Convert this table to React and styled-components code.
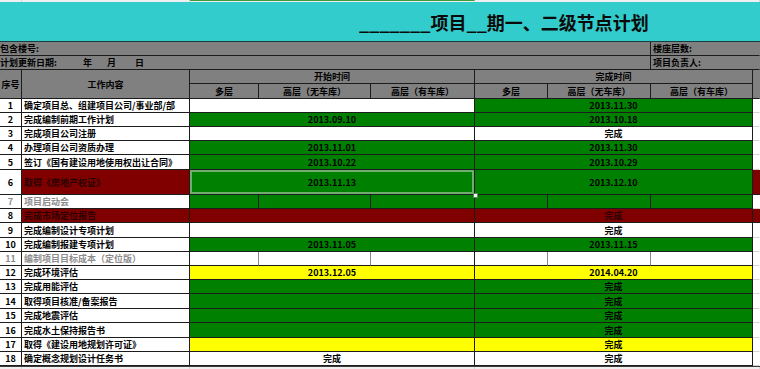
import React from "react";
import styled, { createGlobalStyle } from "styled-components";

const COLS = "22px 168px 69px 112px 104px 73px 103px 102px 7px";
const W = "#ffffff";
const G = "#008000";
const Y = "#ffff00";
const R = "#800000";
const GR = "#808080";
const LINE = "#1c1c1c";

const Global = createGlobalStyle`
  html, body { margin: 0; padding: 0; background: #ffffff; overflow: hidden; }
  body { font-family: "Noto Sans CJK SC", "Noto Sans", sans-serif; }
  * { box-sizing: border-box; }
`;

const Page = styled.div`
  width: 760px;
  height: 369px;
  display: flex;
  flex-direction: column;
  overflow: hidden;
`;

const Strip = styled.div`
  display: grid;
  grid-template-columns: ${COLS};
  height: ${(p) => p.$h}px;
  background: #efefef;
  border-top: ${(p) => (p.$top ? "1px solid #3a3a3a" : "none")};
`;

const StripCell = styled.div`
  grid-column: span ${(p) => p.$span || 1};
  border-right: 1px solid #d6d6d6;
  border-top: ${(p) => (p.$accent ? `1px solid #3c9c3c` : "none")};
`;

const TitleBar = styled.div`
  height: 40px;
  background: #33cccc;
  border-bottom: 1px solid #1d3b3b;
  display: flex;
  align-items: center;
  padding-left: 359px;
  font-size: 18px;
  font-weight: 700;
  color: #0a0a0a;
  white-space: pre;
  letter-spacing: 0;
`;

const Row = styled.div`
  display: grid;
  grid-template-columns: ${COLS};
  height: ${(p) => p.$h}px;
`;

const HeaderBlock = styled.div`
  display: grid;
  grid-template-columns: ${COLS};
  grid-template-rows: 14px 15px;
`;

const Cell = styled.div`
  grid-column: span ${(p) => p.$span || 1};
  grid-row: span ${(p) => p.$rows || 1};
  position: relative;
  background: ${(p) => p.$bg || W};
  color: ${(p) => p.$color || "#000"};
  border-right: 1px solid ${(p) => p.$vline || LINE};
  border-bottom: 1px solid ${(p) => p.$hline || LINE};
  display: flex;
  align-items: center;
  justify-content: ${(p) => (p.$left ? "flex-start" : "center")};
  padding-left: ${(p) => (p.$left ? p.$pad ?? 2 : 0)}px;
  font-size: 9px;
  font-weight: 700;
  line-height: 1;
  white-space: nowrap;
  overflow: ${(p) => (p.$selected ? "visible" : "hidden")};
  box-shadow: ${(p) => (p.$selected ? "inset 0 0 0 2px #6fae6f" : "none")};
`;

const Handle = styled.span`
  position: absolute;
  right: -4px;
  bottom: -4px;
  width: 5px;
  height: 5px;
  background: #ffffff;
  border: 1px solid #5a8f5a;
  z-index: 2;
`;

const DatePart = styled.span`
  margin-left: ${(p) => p.$ml}px;
`;

const rows = [
  { n: 1, task: "确定项目总、组建项目公司/事业部/部", start: { bg: W }, finish: { bg: G, text: "2013.11.30" }, h: 14 },
  { n: 2, task: "完成编制前期工作计划", start: { bg: G, text: "2013.09.10" }, finish: { bg: G, text: "2013.10.18" }, h: 14 },
  { n: 3, task: "完成项目公司注册", start: { bg: W }, finish: { bg: W, text: "完成" }, h: 14 },
  { n: 4, task: "办理项目公司资质办理", start: { bg: G, text: "2013.11.01" }, finish: { bg: G, text: "2013.11.30" }, h: 14 },
  { n: 5, task: "签订《国有建设用地使用权出让合同》", start: { bg: G, text: "2013.10.22" }, finish: { bg: G, text: "2013.10.29" }, h: 15 },
  { n: 6, task: "取得《房地产权证》", taskBg: R, start: { bg: G, text: "2013.11.13", selected: true }, finish: { bg: G, text: "2013.12.10" }, extra: R, h: 25 },
  { n: 7, task: "项目启动会", muted: true, start: { bg: G, split: true }, finish: { bg: G, split: true }, h: 14 },
  { n: 8, task: "完成市场定位报告", taskBg: R, start: { bg: R }, finish: { bg: R, text: "完成" }, extra: R, h: 14 },
  { n: 9, task: "完成编制设计专项计划", start: { bg: W }, finish: { bg: W, text: "完成" }, h: 15 },
  { n: 10, task: "完成编制报建专项计划", start: { bg: G, text: "2013.11.05" }, finish: { bg: G, text: "2013.11.15" }, h: 14 },
  { n: 11, task: "编制项目目标成本（定位版）", muted: true, start: { bg: W, split: true }, finish: { bg: W, split: true }, h: 14 },
  { n: 12, task: "完成环境评估", start: { bg: Y, text: "2013.12.05" }, finish: { bg: Y, text: "2014.04.20" }, h: 14 },
  { n: 13, task: "完成用能评估", start: { bg: G }, finish: { bg: G, text: "完成" }, h: 14 },
  { n: 14, task: "取得项目核准/备案报告", start: { bg: G }, finish: { bg: G, text: "完成" }, h: 15 },
  { n: 15, task: "完成地震评估", start: { bg: G }, finish: { bg: G, text: "完成" }, h: 14 },
  { n: 16, task: "完成水土保持报告书", start: { bg: G }, finish: { bg: G, text: "完成" }, h: 15 },
  { n: 17, task: "取得《建设用地规划许可证》", start: { bg: Y }, finish: { bg: Y, text: "完成" }, h: 14 },
  { n: 18, task: "确定概念规划设计任务书", start: { bg: W, text: "完成" }, finish: { bg: W, text: "完成" }, h: 14 },
];

function timeCells(part, key) {
  const textColor = part.bg === R ? "#2a0000" : "#000";
  const splitLine = part.bg === W ? "#8a8a8a" : LINE;
  if (part.split) {
    return [0, 1, 2].map((i) => (
      <Cell key={`${key}${i}`} $bg={part.bg} $vline={i < 2 ? splitLine : LINE} />
    ));
  }
  return (
    <Cell key={key} $span={3} $bg={part.bg} $color={textColor} $selected={part.selected}>
      {part.text}
      {part.selected && <Handle />}
    </Cell>
  );
}

export default function App() {
  return (
    <Page>
      <Global />
      <Strip $h={2}>
        <StripCell />
        <StripCell />
        <StripCell $span={3} $accent />
        <StripCell $span={4} />
      </Strip>
      <TitleBar>{"_______项目__期一、二级节点计划"}</TitleBar>

      <Row $h={14}>
        <Cell $span={7} $bg={GR} $left $pad={0}>包含楼号:</Cell>
        <Cell $span={2} $bg={GR} $left $vline="transparent">楼座层数:</Cell>
      </Row>
      <Row $h={14}>
        <Cell $span={7} $bg={GR} $left $pad={0}>
          计划更新日期:
          <DatePart $ml={26}>年</DatePart>
          <DatePart $ml={15}>月</DatePart>
          <DatePart $ml={19}>日</DatePart>
        </Cell>
        <Cell $span={2} $bg={GR} $left $vline="transparent">项目负责人:</Cell>
      </Row>

      <HeaderBlock>
        <Cell $rows={2} $bg={GR}>序号</Cell>
        <Cell $rows={2} $bg={GR}>工作内容</Cell>
        <Cell $span={3} $bg={GR}>开始时间</Cell>
        <Cell $span={3} $bg={GR}>完成时间</Cell>
        <Cell $rows={2} $bg={GR} $vline="transparent" />
        <Cell $bg={GR}>多层</Cell>
        <Cell $bg={GR}>高层（无车库）</Cell>
        <Cell $bg={GR}>高层（有车库）</Cell>
        <Cell $bg={GR}>多层</Cell>
        <Cell $bg={GR}>高层（无车库）</Cell>
        <Cell $bg={GR}>高层（有车库）</Cell>
      </HeaderBlock>

      {rows.map((r) => (
        <Row key={r.n} $h={r.h}>
          <Cell $color={r.muted ? "#8c8c8c" : "#000"}>{r.n}</Cell>
          <Cell
            $left
            $bg={r.taskBg || W}
            $color={r.taskBg ? "#2a0000" : r.muted ? "#8c8c8c" : "#000"}
          >
            {r.task}
          </Cell>
          {timeCells(r.start, "s")}
          {timeCells(r.finish, "f")}
          <Cell $bg={r.extra || W} $vline="transparent" $hline={r.extra ? LINE : "#d4d4d4"} />
        </Row>
      ))}

      <Strip $h={3} $top>
        <StripCell />
        <StripCell />
        <StripCell $span={3} />
        <StripCell $span={4} />
      </Strip>
    </Page>
  );
}
